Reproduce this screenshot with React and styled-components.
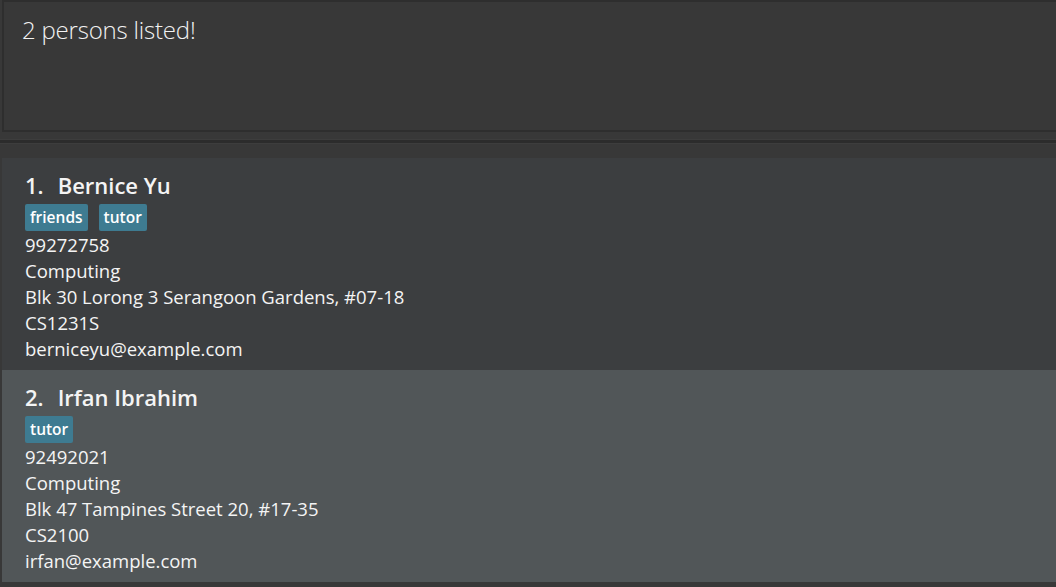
import React from "react";
import styled, { createGlobalStyle } from "styled-components";

const Global = createGlobalStyle`
  html, body { margin: 0; padding: 0; background: #383838; }
  body { font-family: "Open Sans", "Noto Sans", sans-serif; color: #ffffff; }
`;

const Page = styled.div`
  width: 1056px;
  height: 587px;
  overflow: hidden;
  background: #383838;
  display: flex;
  flex-direction: column;
`;

const ResultBox = styled.div`
  height: 132px;
  box-sizing: border-box;
  margin-left: 2px;
  border: 2px solid #2e2e2e;
  border-right: none;
  background: #383838;
  padding: 11px 18px;
  font-size: 24px;
  font-weight: 300;
  color: #f2f2f2;
  letter-spacing: -0.2px;
`;

const Divider = styled.div`
  height: 26px;
  box-sizing: border-box;
  padding-top: 7px;
  &::before {
    content: "";
    display: block;
    height: 3px;
    background: #2c2c2c;
    border-top: 1px solid #3d3d3d;
    border-bottom: 1px solid #3d3d3d;
  }
`;

const List = styled.div`
  margin-left: 2px;
  display: flex;
  flex-direction: column;
`;

const Card = styled.div`
  height: 212px;
  box-sizing: border-box;
  background: ${(p) => (p.$odd ? "#515658" : "#3c3e40")};
  padding: 12px 0 0 23px;
  display: flex;
  flex-direction: column;
`;

const NameRow = styled.div`
  display: flex;
  align-items: center;
  gap: 14px;
  height: 30px;
  font-size: 22px;
  font-weight: 600;
  color: #f4f4f4;
`;

const Tags = styled.div`
  display: flex;
  gap: 11px;
  margin-top: 4px;
  margin-bottom: 1px;
  height: 27px;
`;

const Tag = styled.span`
  background: #3e7b91;
  border-radius: 2px;
  padding: 0 5px;
  font-size: 15.5px;
  font-weight: 600;
  line-height: 27px;
  color: #ffffff;
`;

const Field = styled.div`
  font-size: 18.5px;
  line-height: 26px;
  color: #f4f4f4;
  white-space: nowrap;
`;

const persons = [
  {
    name: "Bernice Yu",
    tags: ["friends", "tutor"],
    fields: ["99272758", "Computing", "Blk 30 Lorong 3 Serangoon Gardens, #07-18", "CS1231S", "berniceyu@example.com"],
  },
  {
    name: "Irfan Ibrahim",
    tags: ["tutor"],
    fields: ["92492021", "Computing", "Blk 47 Tampines Street 20, #17-35", "CS2100", "irfan@example.com"],
  },
];

export default function App() {
  return (
    <Page>
      <Global />
      <ResultBox>2 persons listed!</ResultBox>
      <Divider />
      <List>
        {persons.map((p, i) => (
          <Card key={p.name} $odd={i % 2 === 1}>
            <NameRow>
              <span>{i + 1}.</span>
              <span>{p.name}</span>
            </NameRow>
            <Tags>
              {p.tags.map((t) => (
                <Tag key={t}>{t}</Tag>
              ))}
            </Tags>
            {p.fields.map((f) => (
              <Field key={f}>{f}</Field>
            ))}
          </Card>
        ))}
      </List>
    </Page>
  );
}
